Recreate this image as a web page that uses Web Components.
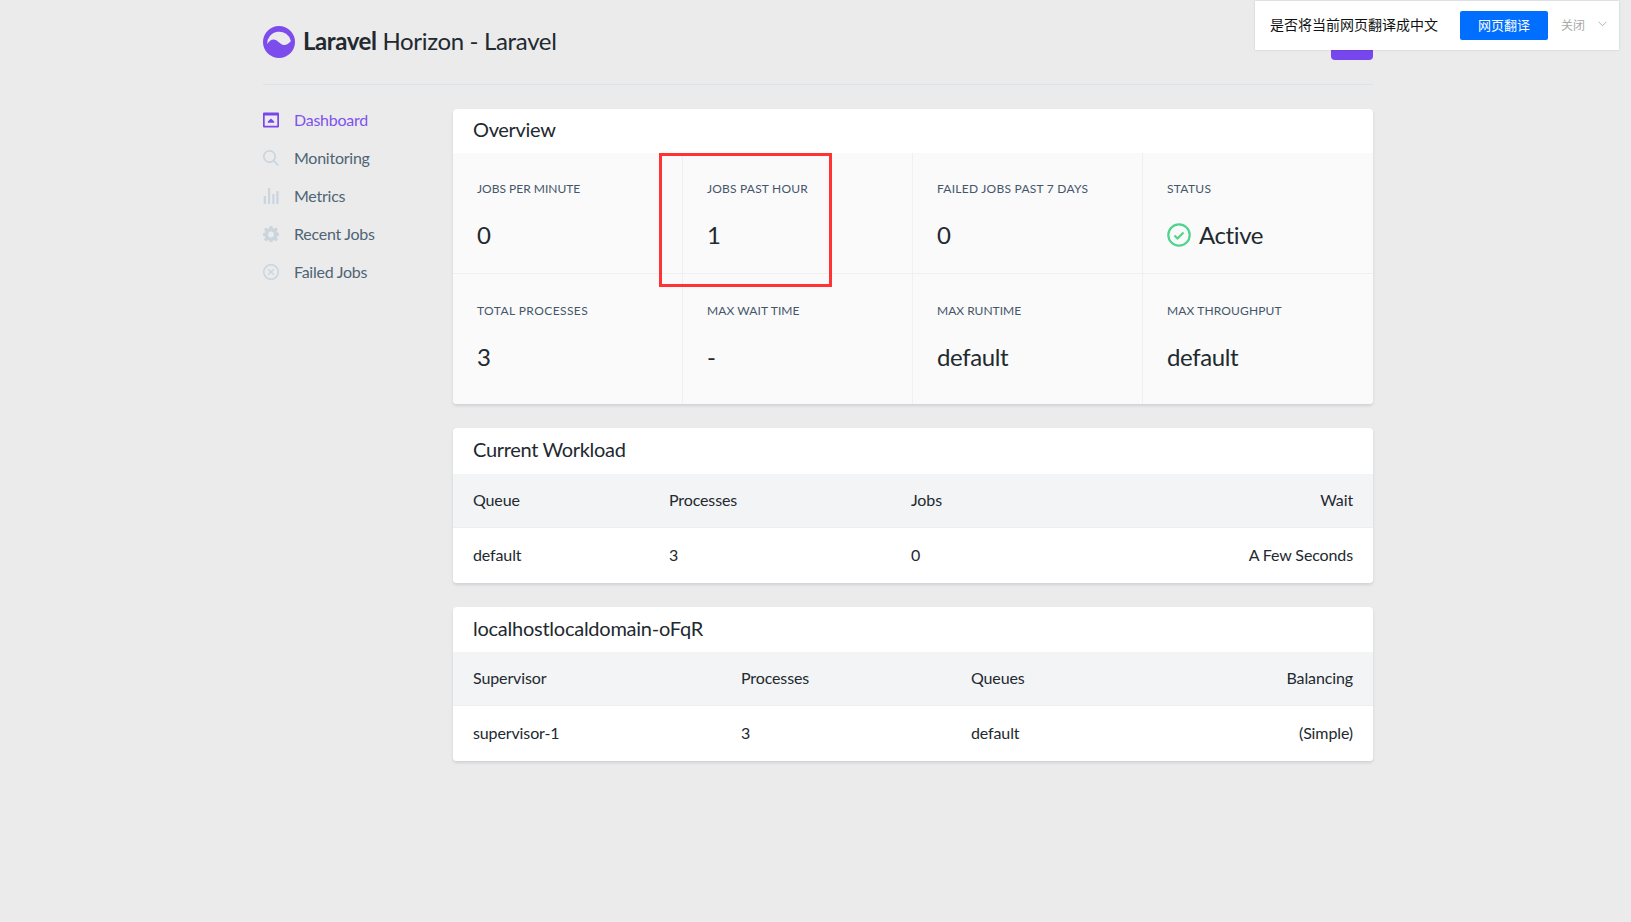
<!DOCTYPE html>
<html><head><meta charset="utf-8"><style>
html,body{margin:0;padding:0;background:#ebebeb;font-family:Lato,"Noto Sans CJK SC",sans-serif;color:#22292f}
body{height:922px;overflow:hidden}
</style></head><body>
<hz-app></hz-app>
<template id="t-app"><style>
:host{display:block;position:relative;height:922px;box-sizing:border-box;padding:0 258px 0 263px}
main{display:flex;padding-top:24px}
hz-nav{width:190px;flex:none}
.col{flex:1;display:flex;flex-direction:column;gap:24px;min-width:0}
</style>
<hz-header></hz-header>
<main><hz-nav></hz-nav><div class="col" id="col"></div></main>
<hz-translate></hz-translate>
<hz-mark></hz-mark>
</template>
<template id="t-header"><style>
:host{display:flex;align-items:flex-start;height:85px;box-sizing:border-box;border-bottom:1px solid #d9e4ef;position:relative}
svg{width:32px;height:32px;margin-top:26px;flex:none}
.t{font-size:24px;line-height:32px;margin:25px 0 0 8px;color:#22292f;font-weight:400;white-space:nowrap;letter-spacing:-.33px}
b{font-weight:700;letter-spacing:-.4px}
.btn{margin:20px 0 0 auto;width:42px;height:40px;background:#7746ec;border-radius:4px}
</style>
<svg viewBox="0 0 32 32"><circle cx="16" cy="16" r="16" fill="#7c4dec"/><path d="M4.200 18A12 12 0 0 1 27.900 15C25 18.500 22 20 19 18.500C16 17 14 13.500 10.500 13.500C8 13.500 6 15.500 4.200 18z" fill="#ebebeb"/></svg>
<div class="t"><b>Laravel</b> Horizon - Laravel</div><div class="btn"></div></template>
<template id="t-nav"><style>
:host{display:block}
a{display:flex;align-items:center;height:20px;margin-bottom:18px;color:#4f6475;font-size:16px;letter-spacing:-.25px;text-decoration:none;gap:15px;white-space:nowrap}
a.on{color:#7f52ee}
svg{width:16px;height:16px;flex:none;fill:#cbd5de;margin-top:1px}
a.on svg{fill:#7746ec}
</style>
<a class="on" href="#"><svg viewBox="0 0 16 16"><path fill-rule="evenodd" d="M1 .5h14a1 1 0 0 1 1 1v13a1 1 0 0 1-1 1H1a1 1 0 0 1-1-1v-13a1 1 0 0 1 1-1zM1.700 3.500v10.300h12.600V3.500z"/><path d="M8 6.500l3.200 3v1.200H4.800V9.500z"/></svg>Dashboard</a>
<a href="#"><svg viewBox="0 0 16 16"><path fill-rule="evenodd" d="M6.500 0a6.500 6.500 0 0 1 5.100 10.500l4.200 4.200-1.200 1.200-4.200-4.200A6.500 6.500 0 1 1 6.500 0zm0 1.700a4.800 4.800 0 1 0 0 9.600 4.800 4.800 0 0 0 0-9.600z"/></svg>Monitoring</a>
<a href="#"><svg viewBox="0 0 16 16"><path d="M.7 8h2.300v8H.7zM5 0h2.200v16H5zM9.300 6h2.200v10H9.300zM13.300 3h2.300v13h-2.300z"/></svg>Metrics</a>
<a href="#"><svg viewBox="0 0 16 16"><path fill-rule="evenodd" d="M6.600 0h2.800l.4 2.200 1.300.5 1.900-1.300 2 2-1.300 1.900.5 1.300 2.200.4v2.800l-2.200.4-.5 1.300 1.300 1.900-2 2-1.900-1.300-1.300.5-.4 2.200H6.600l-.4-2.200-1.300-.5L3 15.500l-2-2 1.300-1.900-.5-1.300L-.4 9.900V7.100l2.200-.4.5-1.300L1 3.500l2-2 1.900 1.300 1.300-.5zM8 5.600a2.900 2.900 0 1 0 0 5.800 2.900 2.900 0 0 0 0-5.800z"/></svg>Recent Jobs</a>
<a href="#"><svg viewBox="0 0 16 16"><path fill-rule="evenodd" d="M8 0a8 8 0 1 1 0 16A8 8 0 0 1 8 0zm0 1.500a6.500 6.500 0 1 0 0 13 6.500 6.500 0 0 0 0-13z"/><path d="M5.700 4.700L8 7l2.300-2.300 1 1L9 8l2.300 2.300-1 1L8 9l-2.300 2.300-1-1L7 8 4.700 5.700z"/></svg>Failed Jobs</a>
</template>
<template id="t-card"><style>
:host{display:block;background:#fff;border-radius:4px;box-shadow:0 2px 3px rgba(60,80,110,.16);overflow:hidden}
h5{margin:0;height:var(--th,46px);line-height:var(--tl,43px);padding:0 20px;font-size:20px;font-weight:400;color:#22292f;white-space:nowrap;letter-spacing:var(--tls,-.32px)}
</style><h5><slot name="title"></slot></h5><slot></slot></template>
<template id="t-stats"><style>
:host{display:grid;grid-template-columns:repeat(4,230px);background:#fafafa}
</style><slot></slot></template>
<template id="t-stat"><style>
:host{display:block;box-sizing:border-box;height:121px;padding:27px 0 0 24px;border-right:1px solid #f0f0f0;border-bottom:1px solid #f0f0f0}
:host([last]){border-right:0}
:host([bottom]){border-bottom:0;height:130px;padding-top:28px}
.l{font-size:12px;line-height:18px;color:#45566a;text-transform:uppercase;white-space:nowrap;letter-spacing:var(--ls,.2px)}
.v{font-size:24px;line-height:32px;margin-top:21px;color:#22292f;display:flex;align-items:center;gap:8px;letter-spacing:-.4px}
</style><div class="l"><slot name="label"></slot></div><div class="v"><slot></slot></div></template>
<template id="t-table"><style>
:host{display:grid;grid-template-columns:var(--cols);font-size:16px;color:#22292f;letter-spacing:-.12px}
</style><slot></slot></template>
<template id="t-cell"><style>
:host{display:flex;align-items:center;height:55px;box-sizing:border-box;background:#fff;padding:0 0 2px 0;white-space:nowrap}
:host([head]){background:#f3f4f6;height:54px;border-bottom:1px solid #eceef0}
:host([first]){padding-left:20px}
:host([right]){justify-content:flex-end;padding-right:20px}
</style><slot></slot></template>
<template id="t-translate"><style>
:host{position:absolute;left:1255px;top:1px;width:364px;height:49px;background:#fff;box-shadow:0 0 2px rgba(0,0,0,.15);display:flex;align-items:center;font:14px "Noto Sans CJK SC",sans-serif;color:#111;box-sizing:border-box;padding-left:15px;white-space:nowrap}
.a{padding-bottom:3px}
.b{margin-left:22px;width:88px;height:29px;background:#006eff;border-radius:2px;color:#fff;font-size:13px;display:flex;align-items:center;justify-content:center;box-sizing:border-box;padding-bottom:2px}
.c{margin-left:13px;color:#aaa;font-size:12px;padding-bottom:2px}
svg{margin-left:13px;width:9px;height:6px;margin-top:-3px}
</style><span class="a">是否将当前网页翻译成中文</span><span class="b">网页翻译</span><span class="c">关闭</span><svg viewBox="0 0 9 6"><path d="M.5.700L4.500 4.800 8.500.7" fill="none" stroke="#b5b5b5"/></svg></template>
<template id="t-mark"><style>
:host{position:absolute;left:659px;top:153px;width:173px;height:134px;box-sizing:border-box;border:3px solid #f33;pointer-events:none}
</style></template>
<script>
function def(n,t){customElements.define(n,class extends HTMLElement{constructor(){super();this.attachShadow({mode:'open'}).append(document.getElementById(t).content.cloneNode(true));}});}
[['hz-header','t-header'],['hz-nav','t-nav'],['hz-card','t-card'],['hz-stats','t-stats'],['hz-stat','t-stat'],['hz-table','t-table'],['hz-cell','t-cell'],['hz-translate','t-translate'],['hz-mark','t-mark']].forEach(a=>def(a[0],a[1]));
customElements.define('hz-app',class extends HTMLElement{constructor(){super();const s=this.attachShadow({mode:'open'});s.append(document.getElementById('t-app').content.cloneNode(true));
const st=(l,v,x='',ls='.2')=>`<hz-stat ${x} style="--ls:${ls}px"><span slot="label">${l}</span>${v}</hz-stat>`;
const ok='<svg width="24" height="24" viewBox="0 0 24 24" style="flex:none"><circle cx="12" cy="12" r="10.700" fill="none" stroke="#4fd48c" stroke-width="2.200"/><path d="M7.500 12.500l3 3 6-6" fill="none" stroke="#4fd48c" stroke-width="2.200"/></svg>';
const tbl=(cols,h,r)=>{let o=`<hz-table style="--cols:${cols}">`;h.forEach((c,i)=>o+=`<hz-cell head ${i==0?'first':''} ${i==h.length-1?'right':''}>${c}</hz-cell>`);r.forEach((c,i)=>o+=`<hz-cell ${i==0?'first':''} ${i==r.length-1?'right':''}>${c}</hz-cell>`);return o+'</hz-table>';};
s.getElementById('col').innerHTML=
`<hz-card style="--th:44px;--tl:41px"><span slot="title">Overview</span><hz-stats>${st('Jobs Per Minute','0','','0')}${st('Jobs Past Hour','1')}${st('Failed Jobs Past 7 Days','0','','.25')}${st('Status',ok+'Active','last','.3')}${st('Total Processes','3','bottom','.42')}${st('Max Wait Time','-','bottom','.1')}${st('Max Runtime','default','bottom','0')}${st('Max Throughput','default','bottom last','.13')}</hz-stats></hz-card>
<hz-card><span slot="title">Current Workload</span>${tbl('216px 242px 1fr 200px',['Queue','Processes','Jobs','Wait'],['default','3','0','A Few Seconds'])}</hz-card>
<hz-card style="--th:45px;--tl:42px;--tls:-.25px"><span slot="title">localhostlocaldomain-oFqR</span>${tbl('288px 230px 1fr 200px',['Supervisor','Processes','Queues','Balancing'],['supervisor-1','3','default','(Simple)'])}</hz-card>`;
}});
</script>
</body></html>
